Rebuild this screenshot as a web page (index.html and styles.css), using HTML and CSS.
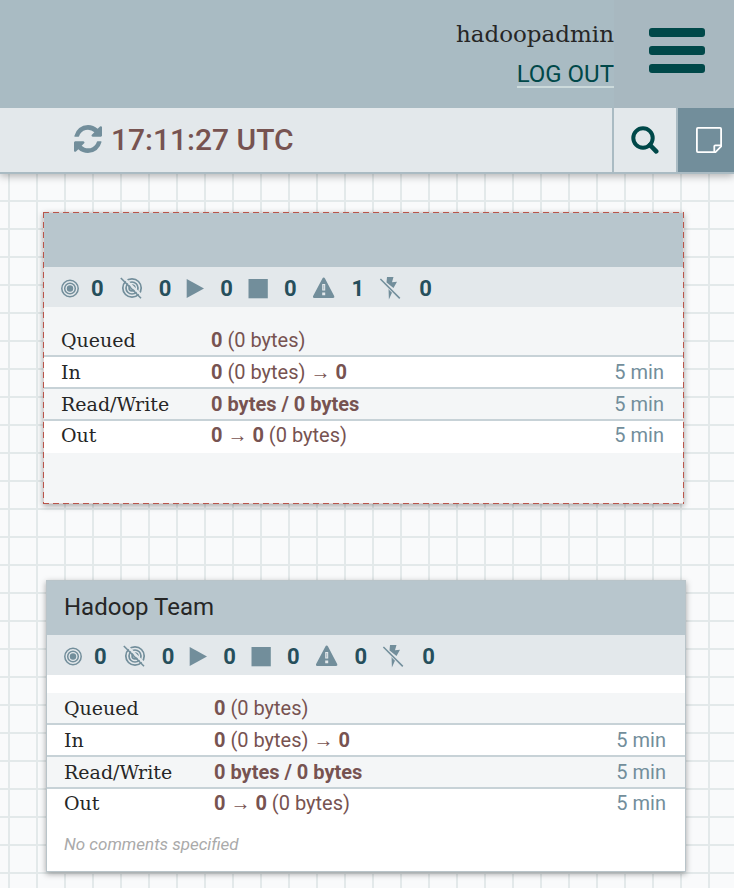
FILE: index.html
```html
<!DOCTYPE html>
<html lang="en">
  <head>
    <meta charset="UTF-8" />
    <meta name="viewport" content="width=device-width, initial-scale=1.0" />
    <title>NiFi Flow</title>
    <link rel="stylesheet" href="styles.css">
  </head>
  <body>
    <!-- shared icons -->
    <svg class="sprite" aria-hidden="true">
      <symbol id="transmitting" viewBox="0 0 18 24">
        <g fill="none" stroke="#728e9b" stroke-width="1.5">
          <circle cx="9" cy="12.5" r="8.2" />
          <circle cx="9" cy="12.5" r="5.3" />
        </g>
        <circle cx="9" cy="12.5" r="3.2" fill="#728e9b" />
      </symbol>
      <symbol id="not-transmitting" viewBox="0 0 28 24">
        <g fill="none" stroke="#728e9b" stroke-width="1.7">
          <circle cx="13" cy="12" r="9.2" />
          <circle cx="13" cy="12" r="6" />
          <circle cx="13" cy="12" r="2.9" />
        </g>
        <path d="M4 1 24 21" stroke="#e3e8eb" stroke-width="2.4" />
        <path d="M1.8 2 22 22.2" stroke="#728e9b" stroke-width="1.6" />
      </symbol>
      <symbol id="running" viewBox="0 0 22 24">
        <path d="M.7 3 18 12.5.7 22z" fill="#728e9b" />
      </symbol>
      <symbol id="stopped" viewBox="0 0 24 24">
        <path d="M.5 3h19.3v19.3H.5z" fill="#728e9b" />
      </symbol>
      <symbol id="invalid" viewBox="0 0 28 24">
        <path d="M11.700 1.500q.8 0 1.300 1L22.300 20.300q.5 1.800-1.200 1.800H2.100Q.5 22.100 1 20.300L10.400 2.500Q10.900 1.500 11.700 1.500z" fill="#728e9b" />
        <path d="M10.200 8h3v6.500h-3zM10.200 16.500h3v2.700h-3z" fill="#e3e8eb" />
        <path d="M11.200 9h1v4.500h-1z" fill="#728e9b" opacity=".5" />
      </symbol>
      <symbol id="disabled" viewBox="0 0 28 24">
        <path d="M8 1h6.500l-1.500 5.300 5-.6-3.500 6.300-7-5.500zM9.500 11.500l4 4-3.600 8z" fill="#728e9b" />
        <path d="M1.400 3 20.800 22.400" stroke="#e3e8eb" stroke-width="3" />
        <path d="M1.400 3 20.800 22.400" stroke="#728e9b" stroke-width="1.5" />
      </symbol>
    </svg>

    <header>
      <div class="banner">
        <div class="user">
          <span class="username">hadoopadmin</span>
          <a class="logout" href="#">LOG OUT</a>
        </div>
        <button type="button" class="menu" aria-label="Menu">
          <span></span>
          <span></span>
          <span></span>
        </button>
      </div>
      <div class="status-bar">
        <div class="refresh">
          <button type="button" aria-label="Refresh">
            <svg width="28" height="28" viewBox="0 0 1536 1536" fill="#728e9b">
              <path d="M1511 928q0 5-1 7-64 268-268 434.500T764 1536q-146 0-282.500-55T238 1324l-129 129q-19 19-45 19t-45-19-19-45V960q0-26 19-45t45-19h448q26 0 45 19t19 45-19 45l-137 137q71 66 161 102t187 36q134 0 250-65t186-179q11-17 53-117 8-23 30-23h192q13 0 22.500 9.500t9.500 22.500zm25-800v448q0 26-19 45t-45 19h-448q-26 0-45-19t-19-45 19-45l138-138Q969 256 768 256q-134 0-250 65T332 500q-11 17-53 117-8 23-30 23H50q-13 0-22.500-9.500T18 608v-7q65-268 270-434.500T768 0q146 0 284 55.500T1297 212l130-129q19-19 45-19t45 19 19 45z" />
            </svg>
          </button>
          <time class="clock">17:11:27 UTC</time>
        </div>
        <button type="button" class="tool" aria-label="Search">
          <svg width="28" height="28" viewBox="0 0 28 28" fill="none" stroke="#004849">
            <circle cx="12" cy="12" r="9.700" stroke-width="4" />
            <path d="m19 19 6.200 6.400" stroke-width="4.600" stroke-linecap="round" />
          </svg>
        </button>
        <button type="button" class="tool bulletins" aria-label="Bulletin board">
          <svg width="26" height="26" viewBox="0 0 26 26" fill="none" stroke="#fff" stroke-width="1.800">
            <path d="M1.900.9h22.200q1 0 1 1V19.500L19.500 25.100H1.900q-1 0-1-1V1.900q0-1 1-1z" />
            <path d="M18.300 25v-5.700q0-1 1-1H25" />
          </svg>
        </button>
      </div>
    </header>

    <main class="canvas">
      <section class="group selected">
        <h2></h2>
        <ul class="counts">
          <li><svg width="18" height="24"><use href="#transmitting" /></svg>0</li>
          <li><svg width="28" height="24"><use href="#not-transmitting" /></svg>0</li>
          <li><svg width="22" height="24"><use href="#running" /></svg>0</li>
          <li><svg width="24" height="24"><use href="#stopped" /></svg>0</li>
          <li><svg width="28" height="24"><use href="#invalid" /></svg>1</li>
          <li><svg width="28" height="24"><use href="#disabled" /></svg>0</li>
        </ul>
        <table>
          <tr>
            <th scope="row">Queued</th>
            <td><b>0</b> (0 bytes)</td>
            <td class="period"></td>
          </tr>
          <tr>
            <th scope="row">In</th>
            <td><b>0</b> (0 bytes) <span class="arrow">→</span> <b>0</b></td>
            <td class="period">5 min</td>
          </tr>
          <tr>
            <th scope="row">Read/Write</th>
            <td><b>0 bytes / 0 bytes</b></td>
            <td class="period">5 min</td>
          </tr>
          <tr>
            <th scope="row">Out</th>
            <td><b>0</b> <span class="arrow">→</span> <b>0</b> (0 bytes)</td>
            <td class="period">5 min</td>
          </tr>
        </table>
        <p class="comments"></p>
      </section>

      <section class="group team">
        <h2>Hadoop Team</h2>
        <ul class="counts">
          <li><svg width="18" height="24"><use href="#transmitting" /></svg>0</li>
          <li><svg width="28" height="24"><use href="#not-transmitting" /></svg>0</li>
          <li><svg width="22" height="24"><use href="#running" /></svg>0</li>
          <li><svg width="24" height="24"><use href="#stopped" /></svg>0</li>
          <li><svg width="28" height="24"><use href="#invalid" /></svg>0</li>
          <li><svg width="28" height="24"><use href="#disabled" /></svg>0</li>
        </ul>
        <table>
          <tr>
            <th scope="row">Queued</th>
            <td><b>0</b> (0 bytes)</td>
            <td class="period"></td>
          </tr>
          <tr>
            <th scope="row">In</th>
            <td><b>0</b> (0 bytes) <span class="arrow">→</span> <b>0</b></td>
            <td class="period">5 min</td>
          </tr>
          <tr>
            <th scope="row">Read/Write</th>
            <td><b>0 bytes / 0 bytes</b></td>
            <td class="period">5 min</td>
          </tr>
          <tr>
            <th scope="row">Out</th>
            <td><b>0</b> <span class="arrow">→</span> <b>0</b> (0 bytes)</td>
            <td class="period">5 min</td>
          </tr>
        </table>
        <p class="comments">No comments specified</p>
      </section>
    </main>
  </body>
</html>
```
FILE: styles.css
```css
* {
  box-sizing: border-box;
}
body {
  margin: 0;
  min-height: 100vh;
  display: flex;
  flex-direction: column;
  font-family: Roboto, "Liberation Sans", sans-serif;
  color: #262626;
}
button {
  padding: 0;
  border: 0;
  background: none;
  cursor: pointer;
}
svg {
  display: block;
}
.sprite {
  position: absolute;
  width: 0;
  height: 0;
}

/* header */
header {
  position: relative;
  box-shadow: 0 2px 8px rgba(0, 0, 0, 0.3);
}
.banner {
  display: flex;
  justify-content: flex-end;
  height: 108px;
  background: #a9bbc3;
}
.user {
  display: flex;
  flex-direction: column;
  align-items: flex-end;
  gap: 12px;
  padding-top: 18px;
}
.username {
  font-family: "Roboto Slab", "DejaVu Serif", serif;
  font-size: 23px;
  line-height: 32px;
}
.logout {
  font-size: 24px;
  line-height: 24px;
  color: #004849;
  text-decoration: none;
  border-bottom: 2px solid #ccdadb;
}
.menu {
  display: flex;
  flex-direction: column;
  gap: 9px;
  width: 120px;
  padding: 28px 29px 0 35px;
  background: #a8b8c0;
}
.menu span {
  width: 100%;
  height: 9px;
  border-radius: 3px;
  background: #004849;
}
.status-bar {
  display: flex;
  height: 66px;
  background: #e3e8eb;
  border-bottom: 2px solid #aabbc3;
}
.refresh {
  flex: 1;
  display: flex;
  align-items: center;
  gap: 9px;
  padding: 0 0 2px 74px;
}
.clock {
  font-size: 30px;
  font-weight: 500;
  color: #775351;
}
.tool {
  display: flex;
  align-items: center;
  justify-content: center;
  width: 64px;
  border-left: 2px solid #aabbc3;
}
.bulletins {
  width: 58px;
  justify-content: flex-end;
  padding-right: 12px;
  background: #728e9b;
}

/* canvas */
.canvas {
  flex: 1;
  padding: 38px 48px 16px 43px;
  background-color: #f9fafb;
  background-image: linear-gradient(#e3e9ea 2px, transparent 2px),
    linear-gradient(90deg, #e3e9ea 2px, transparent 2px);
  background-size: 28px 28px;
  background-position: 8px 26px;
}
.group {
  border: 1px solid #b9c4c9;
  background: #fff;
  box-shadow: 0 2px 6px rgba(0, 0, 0, 0.35);
}
.selected {
  margin-right: 2px;
  border-color: transparent;
  background:
    repeating-linear-gradient(90deg, #ba554a 0 6px, #dfd3d3 6px 10px) top / 100% 1px no-repeat,
    repeating-linear-gradient(90deg, #ba554a 0 6px, #dfd3d3 6px 10px) bottom / 100% 1px no-repeat,
    repeating-linear-gradient(#ba554a 0 6px, #dfd3d3 6px 10px) left / 1px 100% no-repeat,
    repeating-linear-gradient(#ba554a 0 6px, #dfd3d3 6px 10px) right / 1px 100% no-repeat,
    #f4f6f7;
  background-origin: border-box;
}
.team {
  margin: 76px 0 0 3px;
}
.group h2 {
  height: 54px;
  margin: 0;
  padding: 0 17px;
  font-size: 24px;
  font-weight: 400;
  line-height: 52px;
  background: #b8c6cd;
}
.counts {
  display: flex;
  gap: 15px;
  height: 40px;
  margin: 0 0 18px;
  padding: 2px 17px 0;
  list-style: none;
  background: #e3e8eb;
}
.counts li {
  display: flex;
  align-items: center;
  gap: 12px;
  font-size: 22px;
  font-weight: 700;
  color: #264f5c;
}
table {
  width: 100%;
  border-spacing: 0;
  font-size: 20px;
}
tr {
  background: #fff;
}
tr:nth-child(odd) {
  background: #f4f6f7;
}
th,
td {
  height: 32px;
  padding: 0;
  line-height: 28px;
  text-align: left;
  border-bottom: 2px solid #c7d2d7;
}
th {
  width: 167px;
  padding-left: 17px;
  font-family: "Roboto Slab", "DejaVu Serif", serif;
  font-size: 19px;
  font-weight: 400;
}
td {
  color: #775351;
}
tr:last-child > * {
  padding-bottom: 4px;
  border-bottom: 0;
}
.arrow {
  font-family: "Liberation Sans", sans-serif;
  font-weight: 700;
  line-height: 20px;
}
.period {
  padding-right: 19px;
  text-align: right;
  color: #728e9b;
}
.comments {
  height: 50px;
  margin: 0;
  padding: 0 17px;
  font-size: 17px;
  font-style: italic;
  line-height: 46px;
  color: #aaa;
}
```
